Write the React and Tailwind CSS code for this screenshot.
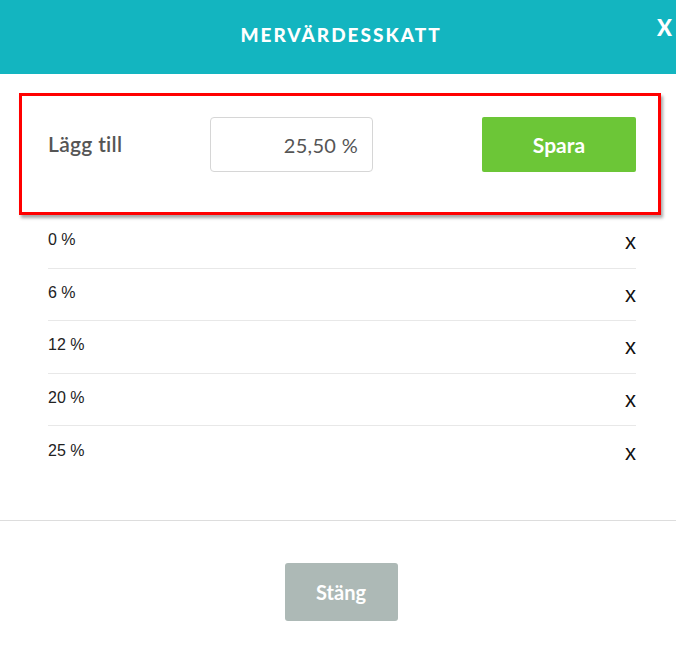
import React from "react";

const rates = ["0 %", "6 %", "12 %", "20 %", "25 %"];

export default function App() {
  return (
    <div className="w-[676px] h-[649px] bg-white overflow-hidden relative font-['Lato',sans-serif]">
      {/* Header */}
      <div className="h-[74px] bg-[#13b5c0] flex items-center justify-center relative">
        <h1 className="text-white text-[19px] font-black tracking-[2px] uppercase mt-[-3px] ml-[6px]">
          Mervärdesskatt
        </h1>
        <span className="absolute left-[657px] top-[11px] text-white text-[22px] font-black">
          X
        </span>
      </div>

      {/* Add rate (highlighted) */}
      <div className="ml-[19px] mt-[19px] w-[642px] h-[122px] border-[3px] border-[#ff0000] shadow-[2px_3px_3px_rgba(0,0,0,0.35)] pl-[26px] pr-[22px] pt-[21px]">
        <div className="flex items-center h-[55px]">
          <span className="w-[162px] text-[21px] text-[#555] font-semibold tracking-[0.3px] mt-[-1px]">Lägg till</span>
          <div className="w-[163px] h-[55px] border border-[#d6d6d6] rounded-[4px] flex items-center justify-end pr-[14px] text-[20px] text-[#555] tracking-[0.3px]">
            25,50 %
          </div>
          <div className="flex-1" />
          <button className="w-[154px] h-[55px] bg-[#6cc637] rounded-[2px] text-white text-[21px] font-bold">
            Spara
          </button>
        </div>
      </div>

      {/* Rate list */}
      <div className="pl-[48px] pr-[40px]">
        {rates.map((r, i) => (
          <div
            key={r}
            className={`h-[52.5px] flex items-center justify-between font-['Liberation_Sans',Arial,sans-serif] ${
              i < rates.length - 1 ? "border-b border-[#e8e8e8]" : ""
            } ${i === 0 ? "mt-[1px]" : ""}`}
          >
            <span className="text-[16px] text-[#222] mt-[-3px]">{r}</span>
            <span className="text-[22px] text-[#111] leading-none mb-[-1px]">x</span>
          </div>
        ))}
      </div>

      {/* Footer */}
      <div className="mt-[41px] border-t border-[#dddddd] flex justify-center pt-[42px]">
        <button className="ml-[6px] w-[113px] h-[58px] bg-[#adb9b6] rounded-[3px] text-white text-[20px] font-bold">
          Stäng
        </button>
      </div>
    </div>
  );
}
